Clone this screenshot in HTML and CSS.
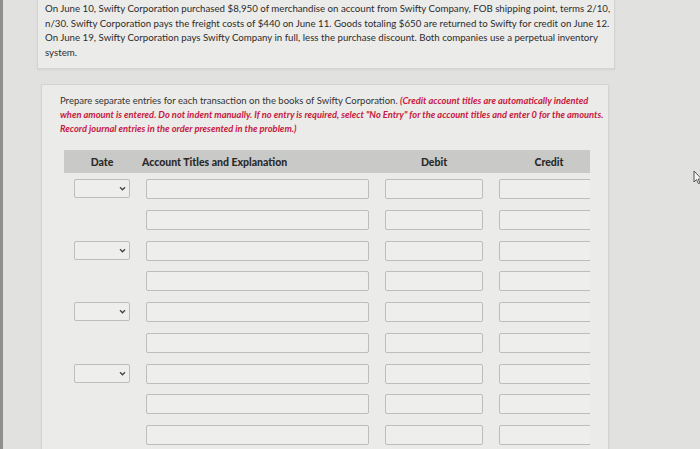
FILE: index.html
```html
<!DOCTYPE html>
<html lang="en">
<head>
<meta charset="utf-8">
<title>Journal entries</title>
<link rel="stylesheet" href="styles.css">
</head>
<body>
<div class="screen">
  <section class="panel problem">
    <p>On June 10, Swifty Corporation purchased $8,950 of merchandise on account from Swifty Company, FOB shipping point, terms 2/10,<br>n/30. Swifty Corporation pays the freight costs of $440 on June 11. Goods totaling $650 are returned to Swifty for credit on June 12.<br>On June 19, Swifty Corporation pays Swifty Company in full, less the purchase discount. Both companies use a perpetual inventory<br>system.</p>
  </section>

  <section class="panel question">
    <p class="instr">Prepare separate entries for each transaction on the books of Swifty Corporation. <em class="note">(Credit account titles are automatically indented<br>when amount is entered. Do not indent manually. If no entry is required, select "No Entry" for the account titles and enter 0 for the amounts.<br>Record journal entries in the order presented in the problem.)</em></p>

    <div class="journal">
      <div class="jrow head">
        <div class="c-date">Date</div>
        <div class="c-acct">Account Titles and Explanation</div>
        <div class="c-debit">Debit</div>
        <div class="c-credit">Credit</div>
      </div>
      <div class="rows">
        <div class="jrow"><div class="field select"><svg class="chev" viewBox="0 0 8 6"><path d="M1 1.5 L4 4.5 L7 1.5" /></svg></div><div class="field"></div><div class="field"></div><div class="field"></div></div>
        <div class="jrow"><div></div><div class="field"></div><div class="field"></div><div class="field"></div></div>
        <div class="jrow"><div class="field select"><svg class="chev" viewBox="0 0 8 6"><path d="M1 1.5 L4 4.5 L7 1.5" /></svg></div><div class="field"></div><div class="field"></div><div class="field"></div></div>
        <div class="jrow"><div></div><div class="field"></div><div class="field"></div><div class="field"></div></div>
        <div class="jrow"><div class="field select"><svg class="chev" viewBox="0 0 8 6"><path d="M1 1.5 L4 4.5 L7 1.5" /></svg></div><div class="field"></div><div class="field"></div><div class="field"></div></div>
        <div class="jrow"><div></div><div class="field"></div><div class="field"></div><div class="field"></div></div>
        <div class="jrow"><div class="field select"><svg class="chev" viewBox="0 0 8 6"><path d="M1 1.5 L4 4.5 L7 1.5" /></svg></div><div class="field"></div><div class="field"></div><div class="field"></div></div>
        <div class="jrow"><div></div><div class="field"></div><div class="field"></div><div class="field"></div></div>
        <div class="jrow"><div></div><div class="field"></div><div class="field"></div><div class="field"></div></div>
      </div>
    </div>
  </section>

  <svg class="cursor" viewBox="0 0 10 15"><path d="M1 1 L1 12 L3.6 9.6 L5.4 13.6 L7 12.9 L5.3 9 L8.6 9 Z" /></svg>
</div>
</body>
</html>
```

FILE: styles.css
```css
html, body {
  margin: 0;
  padding: 0;
}

body {
  background: #e1e1df;
  font-family: Lato, "Open Sans", Arial, sans-serif;
  color: #3a3a3a;
}

.screen {
  position: relative;
  height: 449px;
  overflow: hidden;
  border-left: 3px solid #8f8f8d;
  box-sizing: border-box;
}

.panel {
  background: #ebebe9;
  border: 1px solid #d4d4d2;
  box-shadow: 0 1px 2px rgba(0, 0, 0, 0.06);
  box-sizing: border-box;
}

.problem {
  margin-left: 34px;
  width: 578px;
  border-top: none;
  padding: 1px 0 9px 7px;
}

.problem p {
  margin: 0;
  font-size: 9.7px;
  line-height: 14.5px;
  color: #2c2c2c;
  white-space: nowrap;
}

.question {
  margin: 15px 0 0 38px;
  width: 568px;
  height: 400px;
  padding: 9px 0 0 18px;
}

.instr {
  margin: 0;
  font-size: 9.5px;
  line-height: 14px;
  color: #333;
  white-space: nowrap;
}

.note {
  color: #c8173f;
  font-weight: bold;
  font-style: italic;
  font-size: 0.98em;
}

.journal {
  margin: 14px 0 0 4px;
  width: 526px;
  overflow: hidden;
}

.jrow {
  display: grid;
  grid-template-columns: 56px 223px 98px 100px;
  column-gap: 16px;
  padding-left: 10px;
  height: 20px;
}

.head {
  height: 23px;
  background: #c9c9c7;
  align-items: center;
  font-weight: 900;
  font-size: 10.5px;
  color: #2a2a2a;
}

.head .c-date,
.head .c-debit,
.head .c-credit {
  text-align: center;
}

.head .c-acct {
  margin-left: -4px;
}

.rows {
  display: flex;
  flex-direction: column;
  gap: 10.75px;
  margin-top: 6px;
}

.field {
  height: 20px;
  border: 1px solid #bdbdbb;
  border-radius: 2px;
  background: #eeeeec;
  box-sizing: border-box;
}

.select {
  height: 19px;
  position: relative;
}

.chev {
  position: absolute;
  right: 3px;
  top: 6px;
  width: 7px;
  height: 5px;
}

.chev path {
  fill: none;
  stroke: #444;
  stroke-width: 1.6;
}

.cursor {
  position: absolute;
  left: 690px;
  top: 170px;
  width: 10px;
  height: 15px;
}

.cursor path {
  fill: #f4f4f4;
  stroke: #444;
  stroke-width: 0.9;
}
```
